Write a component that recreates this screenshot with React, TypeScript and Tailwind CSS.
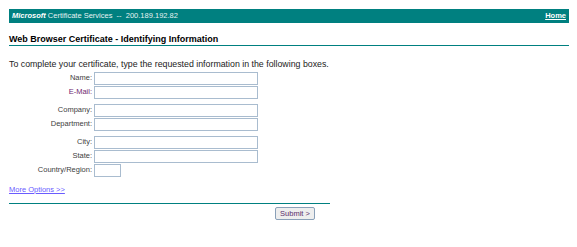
import React from "react";

const Row = ({ label, w = "w-[164px]", labelClass = "text-[#404040]" }: { label: string; w?: string; labelClass?: string }) => (
  <div className="flex items-center h-[14px]">
    <div className={`w-[85px] text-right pr-[2px] text-[7.5px] leading-none ${labelClass}`}>{label}</div>
    <div className={`h-[13px] ${w} border border-[#a9bccf] bg-white`} />
  </div>
);

export default function App() {
  return (
    <div className="w-[577px] h-[247px] bg-white pt-[9px] pl-[9px] pr-[8px]" style={{ fontFamily: '"Liberation Sans", Arial, sans-serif' }}>
      <div className="h-[14px] bg-[#008080] flex items-center justify-between pl-[3px] pr-[3px] text-[7.5px] leading-none">
        <div className="text-[#e6f2f2]">
          <span className="font-bold italic text-white">Microsoft</span> Certificate Services&nbsp; --&nbsp; 200.189.192.82
        </div>
        <div className="font-bold text-white underline">Home</div>
      </div>
      <div className="mt-[11px] border-b border-[#008080]">
        <div className="font-bold text-[9px] leading-[11px] text-black">Web Browser Certificate - Identifying Information</div>
      </div>
      <div className="mt-[12px] text-[8.8px] leading-[12px] text-[#222]">To complete your certificate, type the requested information in the following boxes.</div>
      <div className="mt-[1px] flex flex-col">
        <Row label="Name:" />
        <Row label="E-Mail:" labelClass="text-[#702870]" />
        <div className="h-[4px]" />
        <Row label="Company:" />
        <Row label="Department:" />
        <div className="h-[4px]" />
        <Row label="City:" />
        <Row label="State:" />
        <Row label="Country/Region:" w="w-[27px]" />
      </div>
      <div className="mt-[8px] text-[7.5px] leading-[10px] text-[#6a5cff] underline">More Options &gt;&gt;</div>
      <div className="mt-[8px] w-[321px] border-t border-[#008080] flex justify-end pt-[3px] pr-[15px]">
        <button className="h-[13px] w-[40px] border border-[#8aa0b8] bg-[#eeeeee] rounded-[2px] text-[7.5px] leading-none text-[#5a2d6a]">Submit &gt;</button>
      </div>
    </div>
  );
}
